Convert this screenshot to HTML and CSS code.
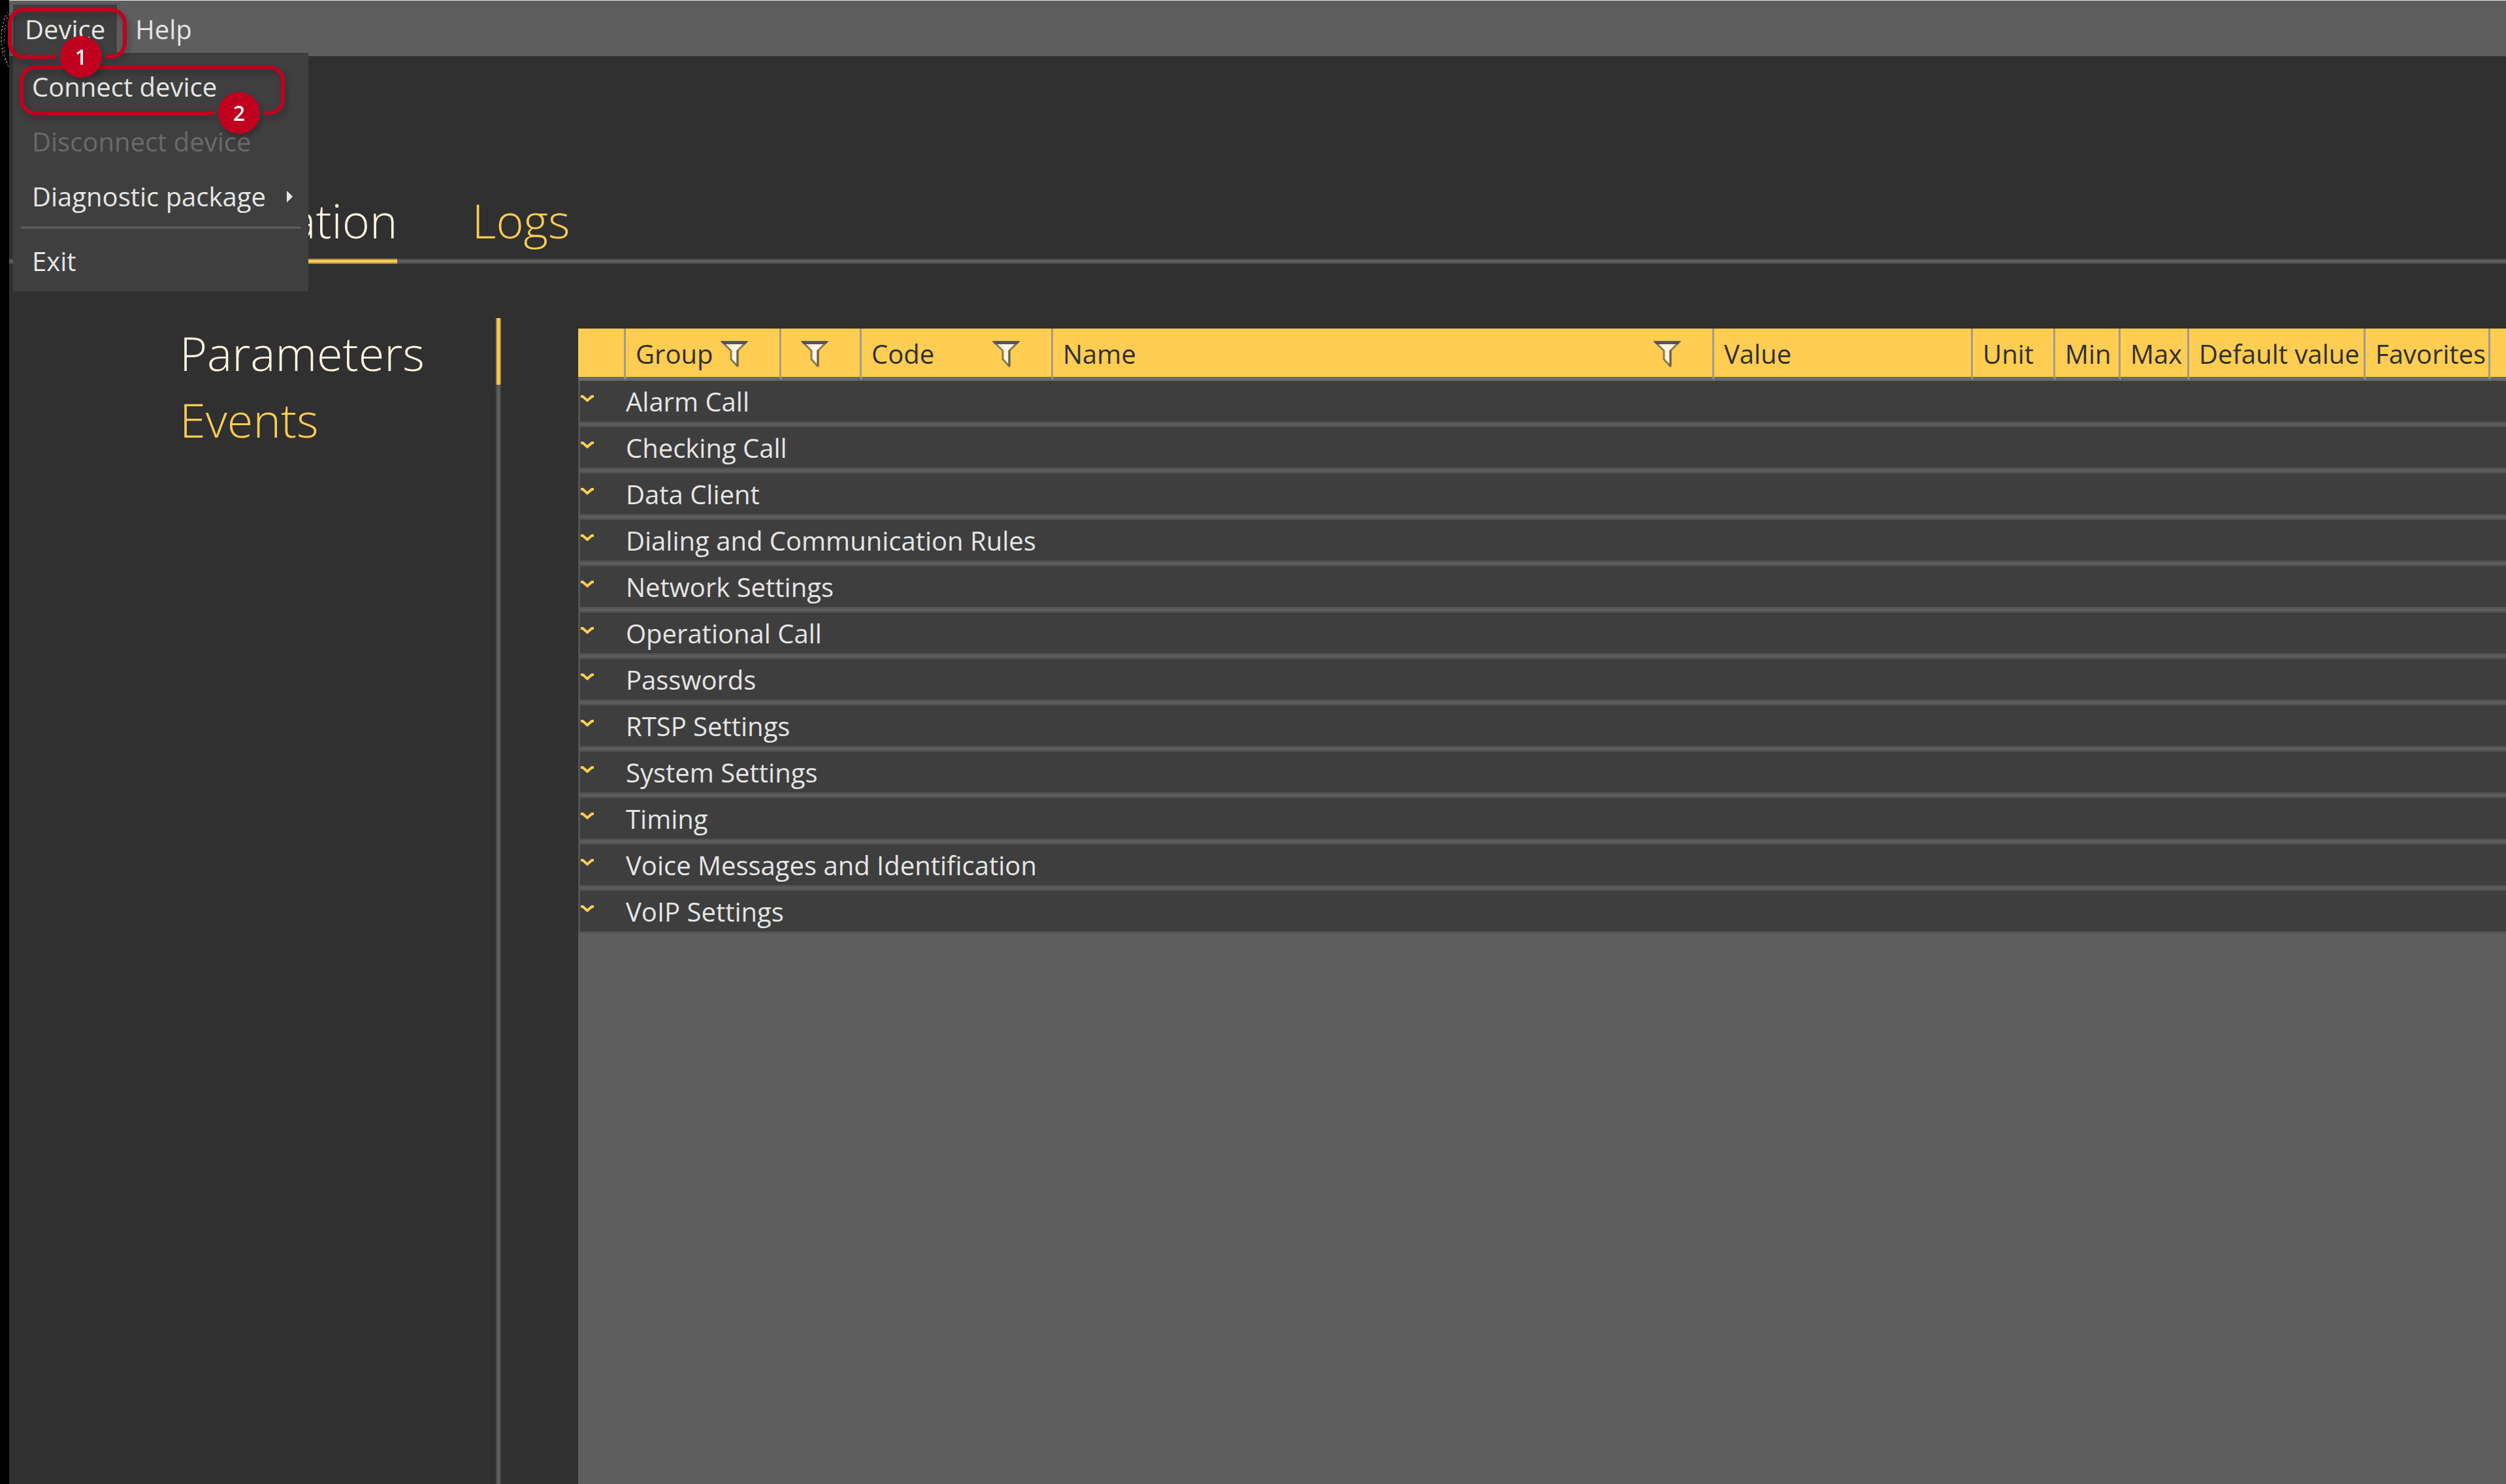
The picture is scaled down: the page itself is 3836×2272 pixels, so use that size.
FILE: index.html
```html
<!DOCTYPE html>
<html lang="en">
<head>
    <meta charset="UTF-8">
    <meta name="viewport" content="width=device-width, initial-scale=1.0">
    <title>Device configuration</title>
    <link rel="stylesheet" href="styles.css">
</head>
<body>
<svg class="symbols" aria-hidden="true">
    <symbol id="funnel" viewBox="0 0 42 40">
        <path d="M2 1 H40 L26 15 V39 L16 28 V15 Z" fill="#fff5e0" stroke="#8a7a52" stroke-width="3"/>
        <path d="M26 14 V38" stroke="#6a6250" stroke-width="3"/>
        <path d="M0 0 H42 L38 5 H4 Z" fill="#555"/>
    </symbol>
    <symbol id="chevron" viewBox="0 0 22 12">
        <path d="M1 2 H4 L11 8 L18 2 H21" fill="none" stroke="#fecd51" stroke-width="4"/>
    </symbol>
</svg>
<div class="app">
    <header class="menubar">
        <div class="menu-root">
            <button type="button" class="menu-btn open">Device</button>
            <div class="menu">
                <button type="button" class="menu-item">Connect device</button>
                <button type="button" class="menu-item" disabled>Disconnect device</button>
                <button type="button" class="menu-item">Diagnostic package
                    <svg class="arrow" viewBox="0 0 9 18"><path d="M0 0 L9 9 L0 18 Z" fill="#e5e5e5"/></svg>
                </button>
                <hr>
                <button type="button" class="menu-item">Exit</button>
            </div>
            <!-- numbered steps over the menu -->
            <svg class="steps" width="472" height="220" viewBox="0 0 472 220">
                <g fill="none" stroke="#fff" stroke-width="1" stroke-dasharray="1 4 2 3 1 6">
                    <path d="M12 19 Q-8 58 14 104"/>
                    <path d="M13 22 Q0 60 12 100"/>
                    <path d="M8 24 Q-4 60 7 92"/>
                </g>
                <g class="step">
                    <path d="M328 173 H54 A21 21 0 0 1 33 152 V124 A21 21 0 0 1 54 103 H412 A21 21 0 0 1 433 124 V152 A21 21 0 0 1 412 173 H404"/>
                    <circle cx="366" cy="173" r="32"/>
                    <text x="366" y="185">2</text>
                </g>
                <g class="step">
                    <path d="M86 87 H36 A21 21 0 0 1 15 66 V36 A21 21 0 0 1 36 15 H170 A21 21 0 0 1 191 36 V66 A21 21 0 0 1 170 87 H162"/>
                    <circle cx="124" cy="87" r="32"/>
                    <text x="124" y="99">1</text>
                </g>
            </svg>
        </div>
        <button type="button" class="menu-btn">Help</button>
    </header>

    <nav class="tabs">
        <a href="#configuration" class="active">Configuration</a>
        <a href="#logs">Logs</a>
    </nav>

    <div class="content">
        <nav class="sidebar">
            <a href="#parameters" class="active">Parameters</a>
            <a href="#events">Events</a>
        </nav>
        <main class="grid">
            <table>
                <colgroup>
                    <col class="c-toggle">
                    <col class="c-group">
                    <col class="c-flag">
                    <col class="c-code">
                    <col>
                    <col class="c-value">
                    <col class="c-unit">
                    <col class="c-min">
                    <col class="c-max">
                    <col class="c-default">
                    <col class="c-fav">
                    <col class="c-end">
                </colgroup>
                <thead>
                    <tr>
                        <th></th>
                        <th><div class="head">Group<button type="button" class="filter" aria-label="Filter group"><svg><use href="#funnel"/></svg></button></div></th>
                        <th><div class="head"><button type="button" class="filter" aria-label="Filter"><svg><use href="#funnel"/></svg></button></div></th>
                        <th><div class="head">Code<button type="button" class="filter" aria-label="Filter code"><svg><use href="#funnel"/></svg></button></div></th>
                        <th><div class="head">Name<button type="button" class="filter" aria-label="Filter name"><svg><use href="#funnel"/></svg></button></div></th>
                        <th>Value</th>
                        <th>Unit</th>
                        <th>Min</th>
                        <th>Max</th>
                        <th>Default value</th>
                        <th>Favorites</th>
                        <th></th>
                    </tr>
                </thead>
                <tbody>
                    <tr><td><button type="button" class="toggle" aria-label="Expand"><svg><use href="#chevron"/></svg></button></td><td colspan="11">Alarm Call</td></tr>
                    <tr><td><button type="button" class="toggle" aria-label="Expand"><svg><use href="#chevron"/></svg></button></td><td colspan="11">Checking Call</td></tr>
                    <tr><td><button type="button" class="toggle" aria-label="Expand"><svg><use href="#chevron"/></svg></button></td><td colspan="11">Data Client</td></tr>
                    <tr><td><button type="button" class="toggle" aria-label="Expand"><svg><use href="#chevron"/></svg></button></td><td colspan="11">Dialing and Communication Rules</td></tr>
                    <tr><td><button type="button" class="toggle" aria-label="Expand"><svg><use href="#chevron"/></svg></button></td><td colspan="11">Network Settings</td></tr>
                    <tr><td><button type="button" class="toggle" aria-label="Expand"><svg><use href="#chevron"/></svg></button></td><td colspan="11">Operational Call</td></tr>
                    <tr><td><button type="button" class="toggle" aria-label="Expand"><svg><use href="#chevron"/></svg></button></td><td colspan="11">Passwords</td></tr>
                    <tr><td><button type="button" class="toggle" aria-label="Expand"><svg><use href="#chevron"/></svg></button></td><td colspan="11">RTSP Settings</td></tr>
                    <tr><td><button type="button" class="toggle" aria-label="Expand"><svg><use href="#chevron"/></svg></button></td><td colspan="11">System Settings</td></tr>
                    <tr><td><button type="button" class="toggle" aria-label="Expand"><svg><use href="#chevron"/></svg></button></td><td colspan="11">Timing</td></tr>
                    <tr><td><button type="button" class="toggle" aria-label="Expand"><svg><use href="#chevron"/></svg></button></td><td colspan="11">Voice Messages and Identification</td></tr>
                    <tr><td><button type="button" class="toggle" aria-label="Expand"><svg><use href="#chevron"/></svg></button></td><td colspan="11">VoIP Settings</td></tr>
                </tbody>
            </table>
        </main>
    </div>
</div>
</body>
</html>
```
FILE: styles.css
```css
* {
    box-sizing: border-box;
}
body {
    margin: 0;
    background-color: #303030;
    color: #e5e5e5;
    font-family: "Open Sans", "Noto Sans", sans-serif;
    font-size: 40px;
}
button {
    margin: 0;
    padding: 0;
    border: none;
    background: none;
    color: inherit;
    font: inherit;
    text-align: left;
    cursor: pointer;
}
.symbols {
    display: none;
}
.app {
    display: flex;
    flex-direction: column;
    min-height: 100vh;
    border-left: 14px solid #000;
}

/* menu bar */
.menubar {
    display: flex;
    gap: 10px;
    height: 86px;
    padding: 6px 6px 5px;
    border-top: 1px solid #e5e5e5;
    background-color: #5e5e5e;
}
.menu-root {
    position: relative;
}
.menu-btn {
    display: block;
    height: 74px;
    padding: 2px 18px 0;
    line-height: 72px;
}
.menu-btn.open {
    background-color: #3f3f3f;
}
.menu {
    position: absolute;
    top: 100%;
    left: 0;
    z-index: 1;
    width: 452px;
    padding: 10px 12px 4px;
    background-color: #3f3f3f;
}
.menu-item {
    display: flex;
    align-items: center;
    justify-content: space-between;
    width: 100%;
    padding: 0 12px 0 17px;
    line-height: 84px;
    white-space: nowrap;
}
.menu-item:disabled {
    color: #6a6a6a;
    cursor: default;
}
.menu-item .arrow {
    width: 9px;
    height: 18px;
}
.menu hr {
    height: 3px;
    margin: 4px 0 8px;
    border: none;
    background-color: #5e5e5e;
}
.steps {
    position: absolute;
    top: -7px;
    left: -20px;
    z-index: 2;
    pointer-events: none;
}
.step {
    filter: drop-shadow(3px 6px 5px rgba(0, 0, 0, 0.25));
}
.step path {
    fill: none;
    stroke: #c1001f;
    stroke-width: 6px;
}
.step circle {
    fill: #c1001f;
}
.step text {
    fill: #fff;
    font-size: 32px;
    font-weight: 600;
    text-anchor: middle;
}

/* tabs */
.tabs {
    display: flex;
    gap: 114px;
    padding: 202px 0 0 156px;
    background: linear-gradient(#4a4a4a 2px, #5e5e5e 2px 6px, #4a4a4a 6px) 100% 100% / 100% 8px no-repeat;
}
.tabs a,
.sidebar a {
    color: #fecd51;
    font-size: 72px;
    font-weight: 300;
    line-height: 98px;
    text-decoration: none;
}
.tabs a {
    padding-bottom: 18px;
}
.tabs a.active,
.sidebar a.active {
    color: #fff5e0;
}
.tabs a.active {
    background: linear-gradient(#a98d45 2px, #fecd51 2px 6px, #a98d45 6px) 0 100% / 100% 8px no-repeat;
}

/* content */
.content {
    display: flex;
    flex: 1;
    gap: 118px;
    padding-top: 83px;
}
.sidebar {
    width: 753px;
    flex-shrink: 0;
    padding-left: 261px;
    background: linear-gradient(90deg, #4a4a4a 2px, #5e5e5e 2px 6px, #4a4a4a 6px) 100% 0 / 8px 100% no-repeat;
}
.sidebar a {
    display: block;
    padding-top: 4px;
}
.sidebar a.active {
    background: linear-gradient(90deg, #a98d45 2px, #fecd51 2px 6px, #a98d45 6px) 100% 0 / 8px 100% no-repeat;
}
.grid {
    flex: 1;
    margin-top: 16px;
    background-color: #5e5e5e;
}
table {
    width: 100%;
    table-layout: fixed;
    border-collapse: separate;
    border-spacing: 0;
}
.c-toggle { width: 73px; }
.c-group { width: 238px; }
.c-flag { width: 123px; }
.c-code { width: 293px; }
.c-value { width: 396px; }
.c-unit { width: 126px; }
.c-min { width: 100px; }
.c-max { width: 105px; }
.c-default { width: 270px; }
.c-fav { width: 191px; }
.c-end { width: 24px; }
th {
    height: 80px;
    padding: 4px 0 0 15px;
    border-right: 3px solid #a39c8c;
    border-bottom: 6px solid #6a6a68;
    background-color: #fecd51;
    color: #303030;
    font-weight: 400;
    line-height: 70px;
    text-align: left;
    white-space: nowrap;
}
th:last-child {
    border-right: none;
}
.head {
    display: flex;
    align-items: center;
    justify-content: space-between;
    padding-right: 48px;
}
.filter {
    margin-left: auto;
}
.filter svg {
    display: block;
    width: 42px;
    height: 40px;
}
td {
    height: 71px;
    padding: 2px 0 0;
    border-bottom: 9px double #525252;
    background-color: #3e3e3e;
    background-clip: padding-box;
    line-height: 60px;
    vertical-align: top;
}
td:first-child {
    border-left: 3px solid #555;
}
tr:last-child td {
    height: 65px;
    border-bottom: 3px solid #555;
}
.toggle {
    display: block;
    padding: 20px 0;
}
.toggle svg {
    display: block;
    width: 22px;
    height: 12px;
}
```
